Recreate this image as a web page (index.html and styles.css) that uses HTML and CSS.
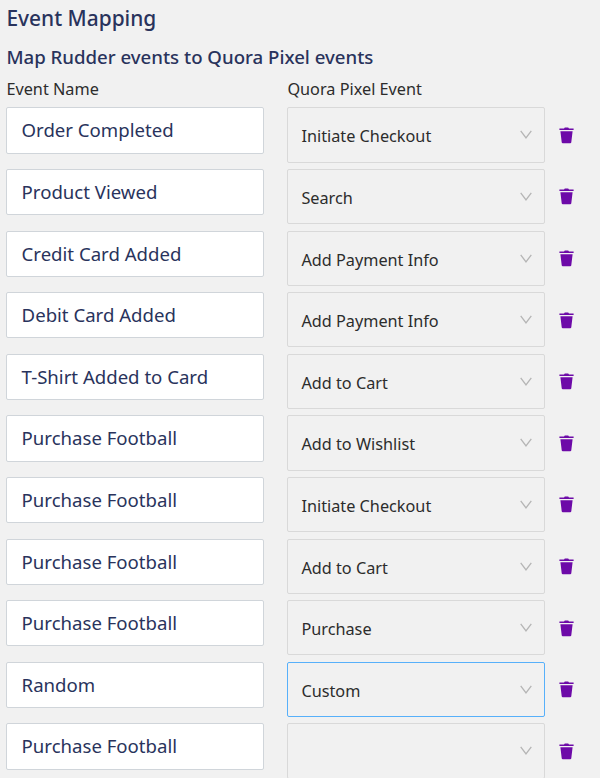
FILE: index.html
```
<!DOCTYPE html>
<html lang="en">
<head>
<meta charset="utf-8">
<title>Event Mapping</title>
<link rel="stylesheet" href="styles.css">
</head>
<body>
<svg width="0" height="0" class="defs" aria-hidden="true">
  <symbol id="chevron" viewBox="0 0 12 10"><path d="M.7 .8 6 8 11.3 .8" fill="none" stroke="#b5b5b5" stroke-width="1.3"/></symbol>
  <symbol id="trash" viewBox="0 0 15 17"><path d="M.4 1.4H5L5.8.6H9.2L10 1.4H14.6V3H.4zM1.4 4.3H13.6L12.3 15.2Q12.2 16.2 11.2 16.2H3.8Q2.8 16.2 2.7 15.2z" fill="#6d0aa8"/></symbol>
</svg>
<main class="panel">
  <h1 class="title">Event Mapping</h1>
  <h2 class="subtitle">Map Rudder events to Quora Pixel events</h2>
  <div class="labels"><span>Event Name</span><span>Quora Pixel Event</span></div>
  <div class="rows" id="rows"></div>
</main>
<script src="app.js"></script>
</body>
</html>
```
FILE: app.js
```
const mappings = [
  ["Order Completed", "Initiate Checkout"],
  ["Product Viewed", "Search"],
  ["Credit Card Added", "Add Payment Info"],
  ["Debit Card Added", "Add Payment Info"],
  ["T-Shirt Added to Card", "Add to Cart"],
  ["Purchase Football", "Add to Wishlist"],
  ["Purchase Football", "Initiate Checkout"],
  ["Purchase Football", "Add to Cart"],
  ["Purchase Football", "Purchase"],
  ["Random", "Custom", true],
  ["Purchase Football", ""]
];
document.getElementById("rows").innerHTML = mappings.map(([name, event, active]) => `
  <div class="row">
    <div class="field">${name}</div>
    <div class="select${active ? " active" : ""}"><span>${event}</span><svg class="chevron"><use href="#chevron"/></svg></div>
    <svg class="trash"><use href="#trash"/></svg>
  </div>`).join("");
```
FILE: styles.css
```
* { box-sizing: border-box; }
html { background: #fff; }
body {
  margin: 0;
  height: 779px;
  overflow: hidden;
  font-family: "Noto Sans", sans-serif;
  color: #2c2c2c;
}
.defs { display: block; }
.panel {
  height: 778.4px;
  overflow: hidden;
  padding: 4px 0 0 6.4px;
  background: #f1f1f1;
}
.title, .subtitle { margin: 0; color: #29335c; font-weight: 500; white-space: nowrap; }
.title { height: 38px; font-size: 20.9px; line-height: 29px; }
.subtitle { height: 35px; font-size: 18.64px; line-height: 29px; }
.labels {
  display: grid;
  grid-template-columns: 281px 258px;
  height: 30.4px;
  font-size: 16.25px;
  line-height: 24px;
}
.row {
  display: grid;
  grid-template-columns: 257.5px 258px 15px;
  column-gap: 23.5px;
  height: 61.6px;
  align-items: start;
}
.field {
  height: 46.3px;
  padding-left: 14.2px;
  border: 1px solid #d0d5da;
  border-radius: 2px;
  background: #fff;
  color: #29335c;
  font-size: 18.6px;
  line-height: 44px;
  white-space: nowrap;
}
.select {
  display: flex;
  justify-content: space-between;
  height: 55.2px;
  padding: 0 12.5px 0 13px;
  border: 1px solid #d9d9d9;
  border-radius: 2px;
  font-size: 16.25px;
  line-height: 57.8px;
}
.select.active { border-color: #57b0fa; }
.chevron { width: 12px; height: 10px; margin-top: 22px; }
.trash { width: 15px; height: 17px; margin: 19.5px 0 0 -10.4px; }
```
